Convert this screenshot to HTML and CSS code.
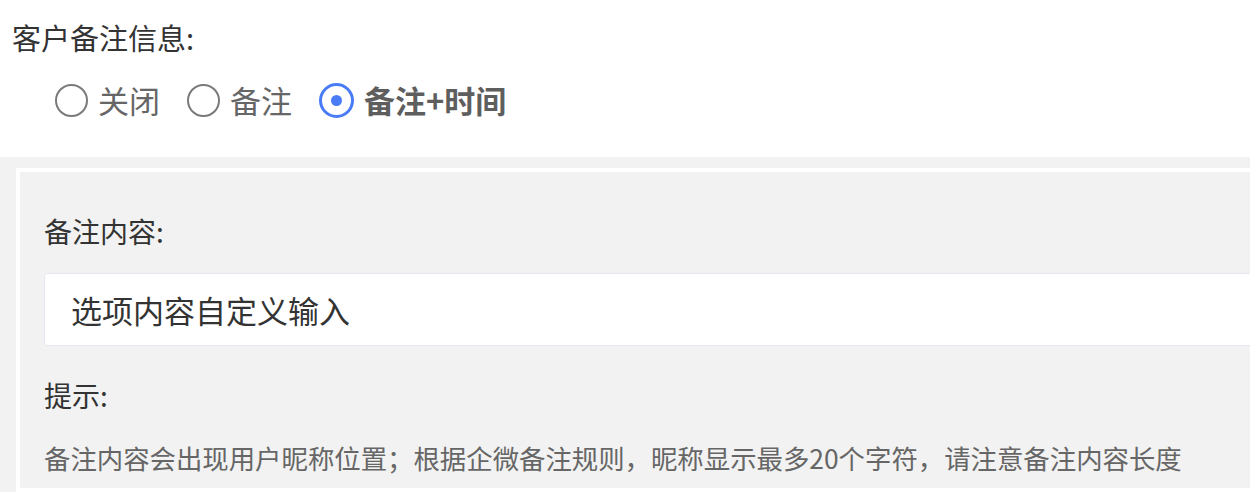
FILE: index.html
```html
<!DOCTYPE html>
<html lang="zh-CN">
<head>
<meta charset="utf-8">
<title>客户备注信息</title>
<link rel="stylesheet" href="styles.css">
</head>
<body>
<div class="page">
  <div class="field-head">
    <div class="field-title">客户备注信息:</div>
    <div class="radio-group">
      <label class="radio">
        <span class="radio-dot"></span>
        <span class="radio-text">关闭</span>
      </label>
      <label class="radio">
        <span class="radio-dot"></span>
        <span class="radio-text">备注</span>
      </label>
      <label class="radio is-checked">
        <span class="radio-dot"></span>
        <span class="radio-text">备注+时间</span>
      </label>
    </div>
  </div>

  <div class="settings">
    <div class="settings-panel">
      <div class="panel-label">备注内容:</div>
      <div class="text-input">选项内容自定义输入</div>
      <div class="panel-label tip-label">提示:</div>
      <div class="tip-text">备注内容会出现用户昵称位置；根据企微备注规则，昵称显示最多20个字符，请注意备注内容长度</div>
    </div>
  </div>
</div>
</body>
</html>
```

FILE: styles.css
```css
html {
  overflow: hidden;
}

body {
  margin: 0;
  background: #fff;
  font-family: "Noto Sans CJK SC", "Noto Sans", sans-serif;
  color: #333;
}

.page {
  width: 1300px;
}

.field-head {
  padding: 17px 0 0 12px;
  height: 140px;
  box-sizing: border-box;
}

.field-title {
  font-size: 29px;
  line-height: 40px;
  color: #333;
}

.radio-group {
  display: flex;
  align-items: center;
  gap: 27px;
  margin-top: 23px;
  padding-left: 43px;
}

.radio {
  display: flex;
  align-items: center;
  gap: 10px;
}

.radio-dot {
  width: 33px;
  height: 33px;
  box-sizing: border-box;
  border: 2px solid #7a7a7a;
  border-radius: 50%;
  position: relative;
}

.radio-text {
  font-size: 31px;
  line-height: 40px;
  color: #666;
}

.radio.is-checked .radio-dot {
  width: 35px;
  height: 35px;
  border: 3px solid #4a7cf7;
}

.radio.is-checked .radio-dot::after {
  content: "";
  position: absolute;
  left: 50%;
  top: 50%;
  width: 11px;
  height: 11px;
  margin: -5.5px 0 0 -5.5px;
  border-radius: 50%;
  background: #4a7cf7;
}

.radio.is-checked .radio-text {
  font-weight: 700;
  color: #5e5e5e;
}

.settings {
  background: #f2f2f2;
  margin-top: 17px;
  padding: 11px 0 0 16px;
}

.settings-panel {
  border: 4px solid #fff;
  border-right: 0;
  background: #f2f2f2;
  padding: 39px 0 0 24px;
  height: 324px;
  box-sizing: border-box;
}

.panel-label {
  font-size: 28px;
  line-height: 40px;
  color: #333;
}

.text-input {
  margin-top: 22px;
  height: 73px;
  box-sizing: border-box;
  border: 1px solid #e3e8f1;
  border-radius: 3px;
  background: #fff;
  padding-left: 26px;
  font-size: 31px;
  line-height: 71px;
  color: #333;
}

.tip-label {
  margin-top: 29px;
}

.tip-text {
  margin-top: 25px;
  font-size: 26.4px;
  line-height: 36px;
  color: #666;
}
```
